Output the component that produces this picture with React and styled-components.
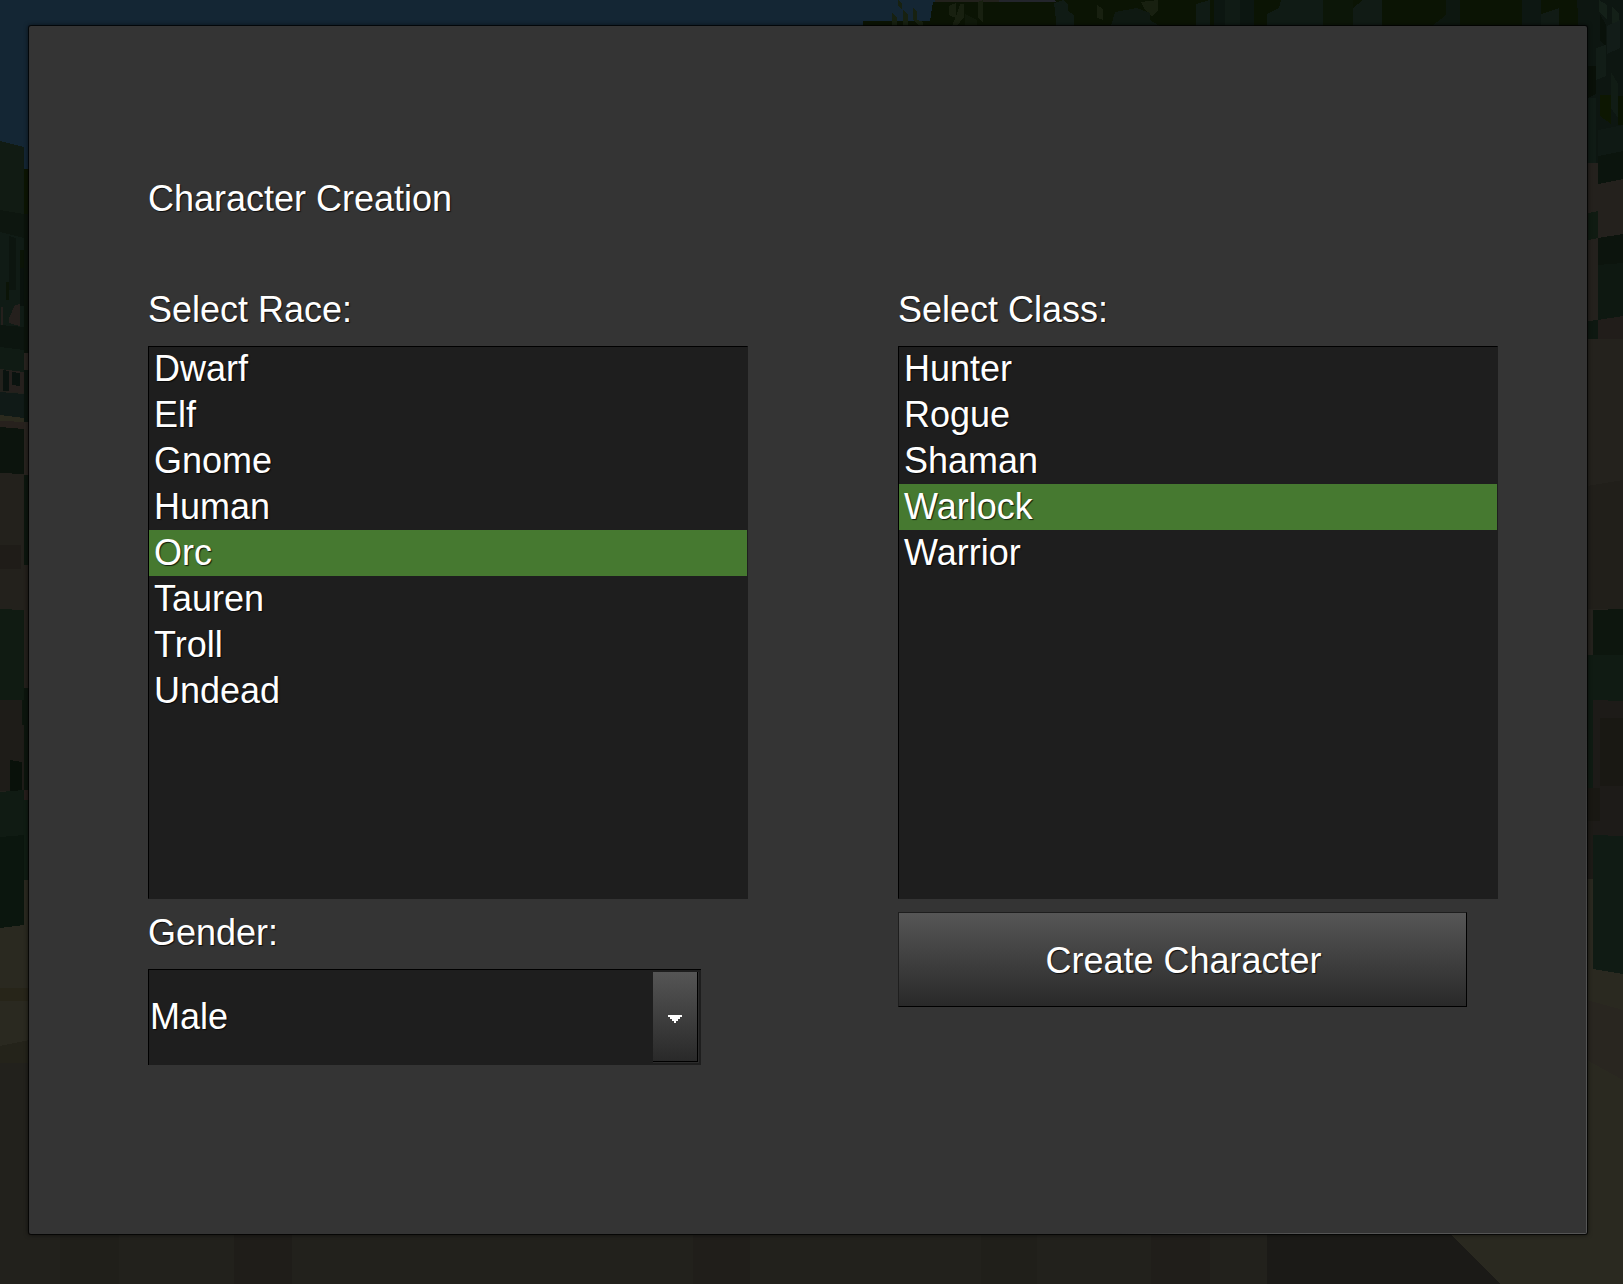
import React, { useState } from "react";
import styled, { createGlobalStyle } from "styled-components";

const GlobalStyle = createGlobalStyle`
  * { box-sizing: border-box; }
  body {
    margin: 0;
    background: #22211c;
    overflow: hidden;
  }
`;

const Screen = styled.main`
  display: grid;
  width: 1623px;
  height: 1284px;
  overflow: hidden;
  font-family: "Liberation Sans", Arial, sans-serif;
  font-size: 36px;
  line-height: 46px;
  color: #fff;
  text-shadow: 1px 1px 1px rgba(0, 0, 0, 0.75);
`;

const Backdrop = styled.svg`
  grid-area: 1 / 1;
  display: block;
`;

const Panel = styled.section`
  grid-area: 1 / 1;
  z-index: 1;
  width: 1558px;
  height: 1208px;
  margin: 26px 0 0 29px;
  padding: 150px 89px 0 119px;
  border-radius: 2px;
  background:
    linear-gradient(to right, transparent 1090px, #555 1280px) bottom / 100% 1px no-repeat,
    linear-gradient(to bottom, transparent 700px, #555 980px) right / 1px 100% no-repeat,
    #343434;
  box-shadow: 0 0 0 1px rgba(0, 0, 0, 0.7), 0 0 4px 1px rgba(0, 0, 0, 0.55);
`;

const Title = styled.h1`
  margin: 0 0 65px;
  font: inherit;
`;

const Columns = styled.div`
  display: grid;
  grid-template-columns: 600px 600px;
  column-gap: 150px;
`;

const Column = styled.div`
  display: flex;
  flex-direction: column;
  align-items: flex-start;
`;

const Label = styled.div`
  margin-bottom: 13px;
`;

const ListBox = styled.ul`
  width: 600px;
  height: 553px;
  margin: 0 0 ${(p) => p.$gap}px;
  padding: 0;
  list-style: none;
  background: #1e1e1e;
  border: 1px solid #1e1e1e;
  border-top-color: #000;
  border-left-color: #000;
`;

const Option = styled.li`
  height: 46px;
  padding-left: 5px;
  cursor: default;
  background: ${(p) => (p.$selected ? "#467930" : "transparent")};

  &:first-child {
    margin-top: -1px;
  }
`;

const Combo = styled.div`
  display: flex;
  align-items: center;
  justify-content: space-between;
  width: 553px;
  height: 96px;
  padding: 2px 2px 2px 1px;
  background: #1e1e1e;
  border-top: 1px solid #000;
  border-left: 1px solid #000;
`;

const ComboValue = styled.span`
  margin-top: -1px;
`;

const ButtonFrame = styled.span`
  display: flex;
  width: 46px;
  height: 91px;
  border: 1px solid #2c2c2c;
  border-width: 0 1px 1px 0;
`;

const ComboButton = styled.button`
  display: flex;
  align-items: center;
  justify-content: center;
  width: 45px;
  height: 90px;
  padding: 0;
  background: linear-gradient(#555, #292929) padding-box;
  border: 0 solid #000;
  border-width: 0 1px 1px 0;
`;

const Arrow = styled.svg`
  display: block;
  margin-top: 5px;
`;

const CreateButton = styled.button`
  width: 569px;
  height: 95px;
  padding: 2px 0 0 2px;
  font: inherit;
  color: inherit;
  text-shadow: inherit;
  background: linear-gradient(#565656, #292929) padding-box;
  border: 1px solid;
  border-color: #1e1e1e #000 #000 #1e1e1e;
`;

const RACES = ["Dwarf", "Elf", "Gnome", "Human", "Orc", "Tauren", "Troll", "Undead"];
const CLASSES = ["Hunter", "Rogue", "Shaman", "Warlock", "Warrior"];

// Each entry: fill colour followed by the polygon's points.
const SCENE = [
  // sky
  ["#142634", "0,0 935,0 935,30 30,30 30,170 0,170"],
  // forest on the left
  ["#111b13", "0,141 24,147 24,215 0,211"],
  ["#0d160f", "0,210 24,214 24,238 0,232"],
  ["#101b15", "0,232 24,238 24,330 0,326"],
  ["#0c150f", "9,236 16,238 16,290 9,290"],
  ["#0b1407", "6,282 9,282 9,300 6,300"],
  ["#0b1407", "20,250 24,250 24,268 20,268"],
  ["#0a120d", "20,268 24,268 24,306 20,306"],
  ["#25201d", "1,307 3,307 3,325 1,325"],
  ["#25201d", "9,318 15,305 20,304 20,326 9,323"],
  ["#0c150f", "0,325 24,327 24,350 0,347"],
  ["#101b14", "0,347 24,350 24,372 0,369"],
  ["#25201d", "3,370 24,372 24,393 3,391"],
  ["#0a130f", "3,370 9,371 9,391 3,391"],
  ["#0a130f", "12,372 20,373 20,386 12,385"],
  ["#101a17", "0,392 24,394 24,418 0,415"],
  ["#2b2a1e", "0,415 24,418 24,422 0,421"],
  ["#27211d", "0,421 28,422 28,430 0,427"],
  ["#0c140d", "0,427 24,429 24,474 0,473"],
  ["#23211c", "0,473 24,474 24,612 0,609"],
  ["#1f1c18", "0,545 21,545 21,569 0,569"],
  ["#0c1503", "24,169 29,169 29,214 24,214"],
  ["#0b130b", "24,214 29,214 29,353 24,353"],
  ["#28231f", "24,353 29,353 29,370 24,370"],
  ["#0b140e", "24,370 29,370 29,422 24,422"],
  ["#28231f", "24,422 29,422 29,475 24,475"],
  ["#0c160e", "24,475 29,475 29,565 24,565"],
  ["#23201b", "24,565 29,565 29,688 24,688"],
  ["#101b12", "0,609 24,610 24,700 0,700"],
  ["#1e1c18", "0,700 24,700 24,791 0,791"],
  ["#0c150d", "22,700 24,700 24,688 29,688 29,790 24,790 24,725 22,725"],
  ["#09110a", "10,760 22,762 22,791 10,791"],
  ["#0b160e", "0,792 24,790 24,925 0,928"],
  ["#101b13", "0,792 24,790 24,835 0,837"],
  ["#261e1b", "24,790 29,790 29,800 24,800"],
  ["#101c13", "24,800 29,800 29,880 24,880"],
  ["#2a2920", "0,928 24,925 24,880 29,880 29,1063 0,1063"],
  ["#272519", "0,988 29,988 29,1001 0,1001"],
  ["#24231a", "0,1046 29,1040 29,1063 0,1063"],
  // canopy above the panel
  ["#0b1404", "863,21 930,21 933,2 999,2 999,0 1623,0 1623,30 863,30"],
  ["#23252c", "999,0 1054,0 1056,2 999,2"],
  ["#172111", "892,13 897,17 897,26 892,26"],
  ["#172111", "898,0 902,4 902,10 898,6"],
  ["#172111", "903,10 908,14 908,26 903,26"],
  ["#172111", "913,7 917,12 917,20 923,22 923,26 919,26 913,19"],
  ["#182010", "949,6 956,3 956,18 949,15"],
  ["#182010", "960,4 964,4 964,17 957,26 952,26 957,14"],
  ["#182010", "978,2 983,0 983,22 978,18"],
  ["#10190a", "965,14 977,20 977,26 965,26"],
  ["#101b15", "1054,3 1063,0 1068,4 1068,11 1074,15 1074,26 1056,26 1056,20"],
  ["#182010", "1097,5 1103,9 1103,20 1097,18"],
  ["#182010", "1141,2 1158,0 1158,10 1152,16 1145,10"],
  ["#0f1912", "1115,12 1137,8 1150,13 1150,20 1160,26 1111,26"],
  ["#101b15", "1196,4 1210,0 1210,26 1196,26"],
  ["#0c1611", "1214,0 1254,0 1254,26 1214,26"],
  ["#101b15", "1225,0 1240,0 1240,26 1225,26"],
  ["#101b15", "1267,14 1279,8 1281,0 1323,0 1323,26 1267,26"],
  ["#0c1608", "1323,0 1353,0 1353,26 1323,26"],
  ["#111b15", "1353,8 1363,0 1382,0 1382,26 1353,26"],
  ["#0d1710", "1432,26 1446,15 1446,0 1460,0 1460,26"],
  ["#0d1712", "1522,0 1541,0 1541,26 1522,26"],
  ["#111b15", "1541,14 1559,8 1559,26 1541,26"],
  // forest on the right
  ["#0d1611", "1577,0 1623,0 1623,183 1587,163"],
  ["#142018", "1599,0 1607,5 1607,20 1599,12"],
  ["#142018", "1612,7 1619,13 1619,30 1612,24"],
  ["#09110a", "1600,14 1606,25 1606,46 1600,41"],
  ["#121c18", "1607,26 1620,20 1620,48 1607,54"],
  ["#121d17", "1596,48 1606,45 1606,76 1596,80"],
  ["#091008", "1588,66 1596,66 1596,94 1588,98"],
  ["#0d1702", "1600,95 1611,95 1611,124 1600,116"],
  ["#111c15", "1611,72 1618,84 1618,118 1611,108"],
  ["#0b1403", "1618,96 1623,96 1623,125 1618,125"],
  ["#101b15", "1588,98 1596,98 1596,163 1588,163"],
  ["#24211d", "1588,163 1598,163 1598,339 1588,339"],
  ["#101b12", "1588,213 1598,211 1598,238 1588,240"],
  ["#0e1811", "1588,321 1598,320 1598,339 1588,339"],
  ["#0f1914", "1598,130 1623,125 1623,179 1598,184"],
  ["#0b140d", "1598,156 1623,151 1623,179 1598,184"],
  ["#24211d", "1598,184 1623,179 1623,234 1598,238"],
  ["#0c140d", "1598,238 1623,234 1623,263 1598,265"],
  ["#0e1811", "1598,265 1623,263 1623,316 1598,320"],
  ["#211d1a", "1598,320 1623,316 1623,339 1598,339"],
  ["#24221d", "1587,339 1623,339 1623,655 1587,655"],
  ["#211f1a", "1587,486 1623,480 1623,609 1587,609"],
  ["#0d160e", "1593,610 1623,609 1623,655 1593,655"],
  ["#101b13", "1587,655 1623,655 1623,701 1593,700 1593,788 1587,788"],
  ["#1d1b18", "1593,700 1623,701 1623,836 1593,835"],
  ["#191813", "1600,718 1623,718 1623,786 1600,786"],
  ["#191813", "1587,788 1600,788 1600,821 1587,821"],
  ["#1d1b17", "1587,821 1593,821 1593,880 1587,880"],
  ["#2a2920", "1587,879 1623,879 1623,1284 1501,1284 1450,1234 1587,1234"],
  ["#101b14", "1593,835 1623,836 1623,974 1593,969"],
  ["#292620", "1587,1000 1623,1010 1623,1080 1587,1060"],
  // ground
  ["#201f1a", "60,1234 119,1234 119,1284 60,1284"],
  ["#1f1d19", "234,1234 292,1234 292,1284 234,1284"],
  ["#201e1a", "693,1234 750,1234 750,1284 693,1284"],
  ["#201f1a", "981,1234 1037,1234 1037,1284 981,1284"],
  ["#201e1a", "1151,1234 1210,1234 1210,1284 1151,1284"],
  ["#1b1a17", "1267,1234 1450,1234 1501,1284 1267,1284"],
];

function Forest() {
  return (
    <Backdrop width="1623" height="1284" viewBox="0 0 1623 1284" shapeRendering="crispEdges" aria-hidden="true">
      <rect width="1623" height="1284" fill="#22211c" />
      {SCENE.map(([fill, points], i) => (
        <polygon key={i} fill={fill} points={points} />
      ))}
    </Backdrop>
  );
}

function SelectList({ items, value, onChange, gap }) {
  return (
    <ListBox $gap={gap} role="listbox">
      {items.map((item) => (
        <Option
          key={item}
          role="option"
          aria-selected={item === value}
          $selected={item === value}
          onClick={() => onChange(item)}
        >
          {item}
        </Option>
      ))}
    </ListBox>
  );
}

export default function App() {
  const [race, setRace] = useState("Orc");
  const [klass, setKlass] = useState("Warlock");

  return (
    <>
      <GlobalStyle />
      <Screen>
        <Forest />
        <Panel>
          <Title>Character Creation</Title>
          <Columns>
            <Column>
              <Label>Select Race:</Label>
              <SelectList items={RACES} value={race} onChange={setRace} gap={11} />
              <Label>Gender:</Label>
              <Combo>
                <ComboValue>Male</ComboValue>
                <ButtonFrame>
                  <ComboButton aria-label="Choose gender">
                    <Arrow width="14" height="8" viewBox="0 0 14 8" shapeRendering="crispEdges">
                      <path fill="#fff" d="M0 0h14v2h-2v2h-2v2H8v2H6V6H4V4H2V2H0z" />
                    </Arrow>
                  </ComboButton>
                </ButtonFrame>
              </Combo>
            </Column>
            <Column>
              <Label>Select Class:</Label>
              <SelectList items={CLASSES} value={klass} onChange={setKlass} gap={13} />
              <CreateButton>Create Character</CreateButton>
            </Column>
          </Columns>
        </Panel>
      </Screen>
    </>
  );
}
